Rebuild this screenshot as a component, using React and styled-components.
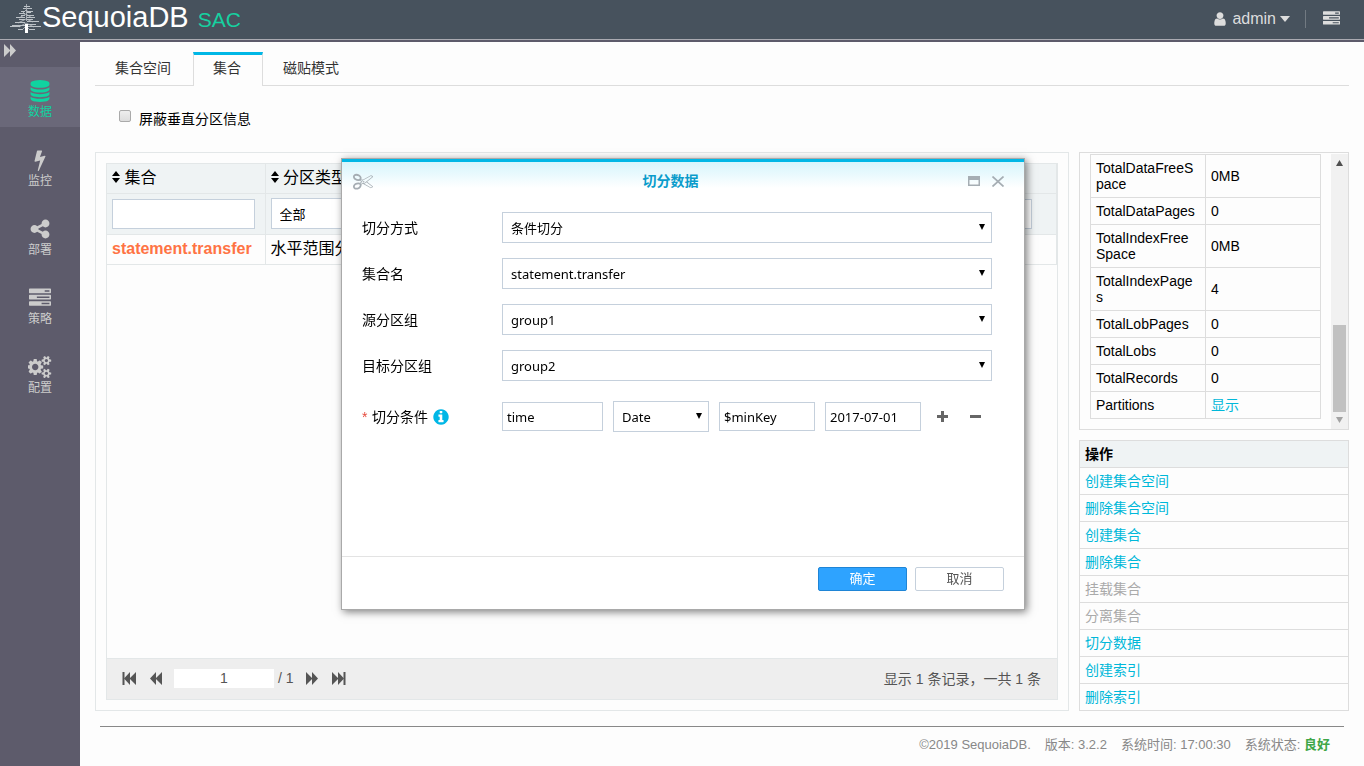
// React
import React from "react";

// StyledComponent
import styled, { createGlobalStyle } from "styled-components";

const ICONS = {
  database:
    "M896 768q237 0 443-43t325-127v170q0 69-103 128t-280 93.5-385 34.5-385-34.5-280-93.5-103-128v-170q119 84 325 127t443 43zm0 768q237 0 443-43t325-127v170q0 69-103 128t-280 93.5-385 34.5-385-34.5-280-93.5-103-128v-170q119 84 325 127t443 43zm0-384q237 0 443-43t325-127v170q0 69-103 128t-280 93.5-385 34.5-385-34.5-280-93.5-103-128v-170q119 84 325 127t443 43zm0-1152q208 0 385 34.5t280 93.5 103 128v128q0 69-103 128t-280 93.5-385 34.5-385-34.5-280-93.5-103-128v-128q0-69 103-128t280-93.5 385-34.5z",
  bolt: "M1333 566q18 20 7 44l-540 1157q-13 25-42 25-4 0-14-2-17-5-25.5-19t-4.5-30l197-808-406 101q-4 1-12 1-18 0-31-11-18-15-13-39l201-825q4-14 16-23t28-9h328q19 0 32 12.5t13 29.5q0 8-5 18l-171 463 396-98q8-2 12-2 19 0 34 15z",
  share:
    "M1344 1024q133 0 226.5 93.5t93.5 226.5-93.5 226.5-226.5 93.5-226.5-93.5-93.5-226.5q0-12 2-34l-360-180q-92 86-218 86-133 0-226.5-93.5t-93.5-226.5 93.5-226.5 226.5-93.5q126 0 218 86l360-180q-2-22-2-34 0-133 93.5-226.5t226.5-93.5 226.5 93.5 93.5 226.5-93.5 226.5-226.5 93.5q-126 0-218-86l-360 180q2 22 2 34t-2 34l360 180q92-86 218-86z",
  tasks:
    "M1024 1408h640v-128h-640v128zm-384-512h1024v-128h-1024v128zm640-512h384v-128h-384v128zm512 832v256q0 26-19 45t-45 19h-1664q-26 0-45-19t-19-45v-256q0-26 19-45t45-19h1664q26 0 45 19t19 45zm0-512v256q0 26-19 45t-45 19h-1664q-26 0-45-19t-19-45v-256q0-26 19-45t45-19h1664q26 0 45 19t19 45zm0-512v256q0 26-19 45t-45 19h-1664q-26 0-45-19t-19-45v-256q0-26 19-45t45-19h1664q26 0 45 19t19 45z",
  cogs: "M832 896q0-106-75-181t-181-75-181 75-75 181 75 181 181 75 181-75 75-181zm768 512q0-52-38-90t-90-38-90 38-38 90q0 53 37.5 90.5t90.5 37.5 90.5-37.5 37.5-90.5zm0-1024q0-52-38-90t-90-38-90 38-38 90q0 53 37.5 90.5t90.5 37.5 90.5-37.5 37.5-90.5zm-384 421v185q0 10-7 19.5t-16 10.5l-155 24q-11 35-32 76 34 48 90 115 7 11 7 20 0 12-7 19-23 30-82.5 89.5t-78.5 59.5q-11 0-21-7l-115-90q-37 19-77 31-11 108-23 155-7 24-30 24h-186q-11 0-20-7.5t-10-17.5l-23-153q-34-10-75-31l-118 89q-7 7-20 7-11 0-21-8-144-133-144-160 0-9 7-19 10-14 41-53t47-61q-23-44-35-82l-152-24q-10-1-17-9.5t-7-19.5v-185q0-10 7-19.5t16-10.5l155-24q11-35 32-76-34-48-90-115-7-11-7-20 0-12 7-20 22-30 82-89t79-59q11 0 21 7l115 90q34-18 77-32 11-108 23-154 7-24 30-24h186q11 0 20 7.5t10 17.5l23 153q34 10 75 31l118-89q8-7 20-7 11 0 21 8 144 133 144 160 0 8-7 19-12 16-42 54t-45 60q23 48 34 82l152 23q10 2 17 10.5t7 19.5zm640 533v140q0 16-149 31-12 27-30 52 51 113 51 138 0 4-4 7-122 71-124 71-8 0-46-47t-52-68q-20 2-30 2t-30-2q-14 21-52 68t-46 47q-2 0-124-71-4-3-4-7 0-25 51-138-18-25-30-52-149-15-149-31v-140q0-16 149-31 13-29 30-52-51-113-51-138 0-4 4-7 4-2 35-20t59-34 30-16q8 0 46 46.5t52 67.5q20-2 30-2t30 2q51-71 92-112l6-2q4 0 124 70 4 3 4 7 0 25-51 138 17 23 30 52 149 15 149 31zm0-1024v140q0 16-149 31-12 27-30 52 51 113 51 138 0 4-4 7-122 71-124 71-8 0-46-47t-52-68q-20 2-30 2t-30-2q-14 21-52 68t-46 47q-2 0-124-71-4-3-4-7 0-25 51-138-18-25-30-52-149-15-149-31v-140q0-16 149-31 13-29 30-52-51-113-51-138 0-4 4-7 4-2 35-20t59-34 30-16q8 0 46 46.5t52 67.5q20-2 30-2t30 2q51-71 92-112l6-2q4 0 124 70 4 3 4 7 0 25-51 138 17 23 30 52 149 15 149 31z",
  user: "M1536 1399q0 109-62.5 187t-150.5 78h-854q-88 0-150.5-78t-62.5-187q0-85 8.5-160.5t31.5-152 58.5-131 94-89 134.5-34.5q131 128 313 128t313-128q76 0 134.5 34.5t94 89 58.5 131 31.5 152 8.5 160.5zm-256-887q0 159-112.5 271.5t-271.5 112.5-271.5-112.5-112.5-271.5 112.5-271.5 271.5-112.5 271.5 112.5 112.5 271.5z",
  info: "M1152 1376v-160q0-14-9-23t-23-9h-96v-512q0-14-9-23t-23-9h-320q-14 0-23 9t-9 23v160q0 14 9 23t23 9h96v320h-96q-14 0-23 9t-9 23v160q0 14 9 23t23 9h448q14 0 23-9t9-23zm-128-896v-160q0-14-9-23t-23-9h-192q-14 0-23 9t-9 23v160q0 14 9 23t23 9h192q14 0 23-9t9-23zm640 416q0 209-103 385.5t-279.5 279.5-385.5 103-385.5-103-279.5-279.5-103-385.5 103-385.5 279.5-279.5 385.5-103 385.5 103 279.5 279.5 103 385.5z",
  scissors:
    "M960 896q26 0 45 19t19 45-19 45-45 19-45-19-19-45 19-45 45-19zm300 64l507 398q28 20 25 56-5 35-35 51l-128 64q-13 7-29 7-17 0-31-8l-690-387-110 66q-8 4-12 5 14 49 10 97-7 77-56 147.5t-132 123.5q-132 84-277 84-136 0-222-78-90-84-79-207 7-76 56-147t131-124q132-84 278-84 83 0 151 31 9-13 22-22l122-73-122-73q-13-9-22-22-68 31-151 31-146 0-278-84-82-53-131-124t-56-147q-5-59 15.5-113t63.5-93q85-79 222-79 145 0 277 84 83 52 132 123t56 148q4 48-10 97 4 1 12 5l110 66 690-387q14-8 31-8 16 0 29 7l128 64q30 16 35 51 3 36-25 56zm-681-260q46-42 21-108t-106-117q-92-59-192-59-74 0-113 36-46 42-21 108t106 117q92 59 192 59 74 0 113-36zm-85 745q81-51 106-117t-21-108q-39-36-113-36-100 0-192 59-81 51-106 117t21 108q39 36 113 36 100 0 192-59zm178-613l96 58v-11q0-36 33-56l14-8-79-44-26 26q-3 3-10 11t-12 12q-2 2-4 3.5t-3 2.5zm224 224l96 32 736-576-128-64-768 431v113l-160 96 9 8q2 2 7 6 4 4 11 12t11 12l26 26zm704 416l128-64-520-408-177 138q-2 3-13 7z",
};

const MENUS = [
  { name: "数据", icon: "database", size: 22, active: true },
  { name: "监控", icon: "bolt", size: 22 },
  { name: "部署", icon: "share", size: 22 },
  { name: "策略", icon: "tasks", size: 22 },
  { name: "配置", icon: "cogs", size: 24 },
];

const DETAILS = [
  ["TotalDataFreeSpace", "0MB"],
  ["TotalDataPages", "0"],
  ["TotalIndexFreeSpace", "0MB"],
  ["TotalIndexPages", "4"],
  ["TotalLobPages", "0"],
  ["TotalLobs", "0"],
  ["TotalRecords", "0"],
];

const ACTIONS = [
  { name: "创建集合空间" },
  { name: "删除集合空间" },
  { name: "创建集合" },
  { name: "删除集合" },
  { name: "挂载集合", disabled: true },
  { name: "分离集合", disabled: true },
  { name: "切分数据" },
  { name: "创建索引" },
  { name: "删除索引" },
];

const FIELDS = [
  { id: "mode", label: "切分方式", value: "条件切分" },
  { id: "name", label: "集合名", value: "statement.transfer" },
  { id: "source", label: "源分区组", value: "group1" },
  { id: "target", label: "目标分区组", value: "group2" },
];

function Icon({ name, size }) {
  return (
    <svg
      width={size}
      height={size}
      viewBox={name === "cogs" ? "0 0 1920 1792" : "0 0 1792 1792"}
      fill="currentColor"
      aria-hidden="true"
    >
      <path d={ICONS[name]} />
    </svg>
  );
}

function TreeLogo() {
  return (
    <svg width="32" height="31" viewBox="0 0 32 31" aria-hidden="true">
      <g fill="none" stroke="#bcc2c7">
        <path d="M14 3.500h6M13 5.500h3M17 5.500h5M11 8.500h4M17 8.500h6M9 10.500h6M17 9.500h4M11 12.500h4M17 12.500h7M6 14.500h9M17 14.500h8M9 16.500h6M17 16.500h6M5 19.500h10M17 18.500h12M2 22.500h13M17 21.500h9M0 23.500h10M17 23.500h14M8 26.500h5M19 26.500h6" />
        <path d="M16.500 1v17M12 11l4-4 4 3M9 15l7-4 6 4M8 20l8-4 7 3M9 24l7-4 8 4M12 27l4-4 4 4" strokeWidth=".8" />
      </g>
      <path d="M15 21h3v9h-3z" fill="#fff" />
    </svg>
  );
}

function Skip({ back, edge }) {
  return (
    <svg width="15" height="13" viewBox="0 0 15 13" fill="currentColor" aria-hidden="true">
      <g transform={back ? "translate(15 0) scale(-1 1)" : undefined}>
        <path d="M1 0l6 6V0l6 6.5-6 6.5V7l-6 6z" />
        {edge && <path d="M12.500 0h2v13h-2z" />}
      </g>
    </svg>
  );
}

function Caret({ up, width = 7 }) {
  return (
    <svg width={width} height="6" viewBox="0 0 8 6" preserveAspectRatio="none" fill="currentColor" aria-hidden="true">
      <path d={up ? "M0 6l4-6 4 6z" : "M0 0h8L4 6z"} />
    </svg>
  );
}

function SortIcon() {
  return (
    <svg width="8" height="12" viewBox="0 0 8 12" fill="currentColor" aria-hidden="true">
      <path d="M0 5l4-5 4 5zM0 7h8l-4 5z" />
    </svg>
  );
}

function Select({ id, label, value }) {
  return (
    <SelectWrap>
      <SelectBox id={id} aria-label={label} defaultValue={value}>
        <option>{value}</option>
      </SelectBox>
      <SelectArrow>
        <Caret width={6} />
      </SelectArrow>
    </SelectWrap>
  );
}

function SplitDialog() {
  return (
    <Overlay>
      <Dialog role="dialog" aria-labelledby="dialog-title">
        <DialogHeader>
          <Icon name="scissors" size={20} />
          <DialogTitle id="dialog-title">切分数据</DialogTitle>
          <HeaderButton aria-label="最大化">
            <svg width="12" height="10" viewBox="0 0 12 10" aria-hidden="true">
              <path d="M0 0h12v10H0zM1.500 4v4.500h9V4z" fill="currentColor" fillRule="evenodd" />
            </svg>
          </HeaderButton>
          <HeaderButton aria-label="关闭">
            <svg width="12" height="11" viewBox="0 0 12 11" aria-hidden="true">
              <path d="M.5.5l11 10M11.500.5l-11 10" stroke="currentColor" strokeWidth="1.700" />
            </svg>
          </HeaderButton>
        </DialogHeader>
        <DialogBody>
          {FIELDS.map((field) => (
            <Field key={field.id}>
              <FieldLabel htmlFor={field.id}>{field.label}</FieldLabel>
              <Select id={field.id} value={field.value} />
            </Field>
          ))}
          <Field>
            <FieldLabel as="div">
              <Star>*</Star>
              <label htmlFor="field">切分条件</label>
              <InfoMark>
                <Icon name="info" size={18} />
              </InfoMark>
            </FieldLabel>
            <Condition>
              <TextBox id="field" defaultValue="time" />
              <Select label="类型" value="Date" />
              <TextBox aria-label="开始" defaultValue="$minKey" />
              <TextBox aria-label="结束" defaultValue="2017-07-01" />
              <StepButton aria-label="添加">
                <svg width="11" height="11" viewBox="0 0 11 11" fill="currentColor" aria-hidden="true">
                  <path d="M4 0h3v4h4v3H7v4H4V7H0V4h4z" />
                </svg>
              </StepButton>
              <StepButton aria-label="删除">
                <svg width="11" height="11" viewBox="0 0 11 11" fill="currentColor" aria-hidden="true">
                  <path d="M0 4h11v3H0z" />
                </svg>
              </StepButton>
            </Condition>
          </Field>
        </DialogBody>
        <DialogFooter>
          <DialogButton $primary>确定</DialogButton>
          <DialogButton>取消</DialogButton>
        </DialogFooter>
      </Dialog>
    </Overlay>
  );
}

export default function App() {
  return (
    <Page>
      <GlobalStyle />
      <Header>
        <TreeLogo />
        <Brand>SequoiaDB</Brand>
        <Product>SAC</Product>
        <UserButton>
          <Icon name="user" size={16} />
          admin
          <Caret width={10} />
        </UserButton>
        <HeaderTasks aria-label="任务">
          <Icon name="tasks" size={17} />
        </HeaderTasks>
      </Header>
      <Body>
        <Sidebar>
          <Collapse aria-label="展开">
            <Skip />
          </Collapse>
          {MENUS.map((menu) => (
            <MenuItem key={menu.name} href="#" $active={menu.active}>
              <MenuIcon>
                <Icon name={menu.icon} size={menu.size} />
              </MenuIcon>
              {menu.name}
            </MenuItem>
          ))}
        </Sidebar>
        <Main>
          <Tabs>
            <Tab href="#">集合空间</Tab>
            <Tab href="#" $active>
              集合
            </Tab>
            <Tab href="#">磁贴模式</Tab>
          </Tabs>
          <CheckLine>
            <CheckBox type="checkbox" />
            屏蔽垂直分区信息
          </CheckLine>
          <Columns>
            <Panel>
              <GridBox>
                <GridTable>
                  <thead>
                    <tr>
                      <HeadCell>
                        <SortIcon /> 集合
                      </HeadCell>
                      <HeadCell>
                        <SortIcon /> 分区类型
                      </HeadCell>
                      <HeadCell $wide />
                    </tr>
                    <tr>
                      <FilterCell>
                        <FilterInput aria-label="集合" />
                      </FilterCell>
                      <FilterCell>
                        <Select label="分区类型" value="全部" />
                      </FilterCell>
                      <FilterCell $last>
                        <FilterInput aria-label="分区组" />
                      </FilterCell>
                    </tr>
                  </thead>
                  <tbody>
                    <tr>
                      <DataCell>
                        <NameLink href="#">statement.transfer</NameLink>
                      </DataCell>
                      <DataCell>水平范围分区</DataCell>
                      <DataCell />
                    </tr>
                  </tbody>
                </GridTable>
                <Pager>
                  <PagerButton aria-label="首页">
                    <Skip back edge />
                  </PagerButton>
                  <PagerButton aria-label="上一页">
                    <Skip back />
                  </PagerButton>
                  <PageInput aria-label="页码" defaultValue="1" />
                  / 1
                  <PagerButton aria-label="下一页">
                    <Skip />
                  </PagerButton>
                  <PagerButton aria-label="末页">
                    <Skip edge />
                  </PagerButton>
                  <PagerInfo>显示 1 条记录，一共 1 条</PagerInfo>
                </Pager>
              </GridBox>
            </Panel>
            <Aside>
              <DetailBox>
                <DetailTable>
                  <tbody>
                    {DETAILS.map(([key, value]) => (
                      <tr key={key}>
                        <td>{key}</td>
                        <td>{value}</td>
                      </tr>
                    ))}
                    <tr>
                      <td>Partitions</td>
                      <td>
                        <BlueLink href="#">显示</BlueLink>
                      </td>
                    </tr>
                  </tbody>
                </DetailTable>
                <ScrollTrack>
                  <Caret up />
                  <ScrollThumb />
                  <ScrollEnd>
                    <Caret />
                  </ScrollEnd>
                </ScrollTrack>
              </DetailBox>
              <ActionList>
                <ActionTitle>操作</ActionTitle>
                {ACTIONS.map((action) => (
                  <ActionItem key={action.name}>
                    <BlueLink href="#" $disabled={action.disabled}>
                      {action.name}
                    </BlueLink>
                  </ActionItem>
                ))}
              </ActionList>
            </Aside>
          </Columns>
          <Footer>
            <span>©2019 SequoiaDB.</span>
            <span>版本: 3.2.2</span>
            <span>系统时间: 17:00:30</span>
            <span>
              系统状态: <Good>良好</Good>
            </span>
          </Footer>
        </Main>
      </Body>
      <SplitDialog />
    </Page>
  );
}

const GlobalStyle = createGlobalStyle`
  * {
    box-sizing: border-box;
  }
  body {
    margin: 0;
    background-color: #fdfdfd;
    color: #000;
    font-family: "Liberation Sans", "Noto Sans CJK SC", sans-serif;
    font-size: 14px;
  }
  button, input, select {
    font: inherit;
    color: inherit;
  }
  a {
    text-decoration: none;
  }
  svg {
    flex: none;
  }
`;

const Page = styled.div`
  display: flex;
  flex-direction: column;
  min-height: 100vh;
`;

const Header = styled.header`
  display: flex;
  align-items: center;
  height: 40px;
  padding: 0 24px 2px 10px;
  background-color: #47525d;
  border-bottom: 1px solid #aaaab1;
`;

const Brand = styled.div`
  padding-bottom: 3px;
  color: #fff;
  font-size: 29px;
  line-height: 34px;
`;

const Product = styled.div`
  margin: 2px auto 0 9px;
  color: #16d1a0;
  font-size: 21px;
`;

const UserButton = styled.button`
  display: flex;
  align-items: center;
  gap: 4px;
  height: 18px;
  padding: 0 15px 0 0;
  border: none;
  border-right: 1px solid #727a82;
  background: none;
  color: #ddd;
  font-size: 16px;
`;

const HeaderTasks = styled.button`
  display: flex;
  padding: 0 0 0 17px;
  border: none;
  background: none;
  color: #ddd;
`;

const Body = styled.div`
  display: flex;
  flex: 1;
  border-top: 2px solid #5d5b6b;
`;

const Sidebar = styled.nav`
  flex: none;
  width: 80px;
  background-color: #5d5b6b;
`;

const Collapse = styled.button`
  display: flex;
  width: 100%;
  height: 25px;
  padding: 2px 3px;
  border: none;
  background: none;
  color: #ccc;
`;

const MenuItem = styled.a`
  display: flex;
  flex-direction: column;
  align-items: center;
  height: 60px;
  margin-bottom: 9px;
  padding-top: 12px;
  background-color: ${(props) => (props.$active ? "#6a6879" : "transparent")};
  color: ${(props) => (props.$active ? "#0fd3a0" : "#ccc")};
  font-size: 12px;
  line-height: 18px;
`;

const MenuIcon = styled.span`
  display: flex;
  align-items: center;
  height: 24px;
`;

const Main = styled.main`
  display: flex;
  flex: 1;
  flex-direction: column;
  min-width: 0;
  padding: 10px 15px 0;
`;

const Tabs = styled.nav`
  display: flex;
  height: 34px;
  border-bottom: 1px solid #ddd;
`;

const Tab = styled.a`
  height: 34px;
  padding: 0 21px 0 19px;
  border: 1px solid ${(props) => (props.$active ? "#ddd" : "transparent")};
  border-top: 3px solid ${(props) => (props.$active ? "#00b7e6" : "transparent")};
  border-bottom: none;
  background-color: ${(props) => (props.$active ? "#fdfdfd" : "transparent")};
  color: #333;
  line-height: 26px;
`;

const CheckLine = styled.label`
  display: flex;
  align-items: center;
  gap: 8px;
  height: 66px;
  padding: 0 0 3px 24px;
`;

const CheckBox = styled.input`
  appearance: none;
  width: 12px;
  height: 12px;
  margin: 0 0 3px;
  border: 1px solid #aaa;
  border-radius: 2px;
  background-image: linear-gradient(#eee, #ddd);
`;

const Columns = styled.div`
  display: flex;
  gap: 10px;
`;

const Panel = styled.section`
  flex: 1;
  display: flex;
  min-width: 0;
  padding: 10px;
  border: 1px solid #e3e7e8;
`;

const GridBox = styled.div`
  display: flex;
  flex: 1;
  flex-direction: column;
  min-width: 0;
  border: 1px solid #e3e7e8;
`;

const GridTable = styled.table`
  width: 100%;
  table-layout: fixed;
  border-collapse: collapse;
  font-size: 16px;
`;

const HeadCell = styled.th`
  width: ${(props) => (props.$wide ? "auto" : "158px")};
  height: 29px;
  padding: 0 5px;
  border-right: 1px solid #e3e7e8;
  border-bottom: 1px solid #e3e7e8;
  background-color: #eff3f4;
  font-weight: normal;
  line-height: 24px;
  text-align: left;
  white-space: nowrap;
`;

const FilterCell = styled.td`
  height: 41px;
  padding: 0 ${(props) => (props.$last ? "24px" : "10px")} 0 5px;
  border-right: 1px solid #e3e7e8;
  border-bottom: 1px solid #e3e7e8;
  background-color: #eff3f4;
`;

const FilterInput = styled.input`
  display: block;
  width: 100%;
  height: 30px;
  border: 1px solid #c5d0dc;
  background-color: #fff;
`;

const DataCell = styled.td`
  height: 30px;
  padding: 0 5px;
  border-right: 1px solid #e3e7e8;
  border-bottom: 1px solid #e3e7e8;
  line-height: 24px;
  white-space: nowrap;
`;

const NameLink = styled.a`
  color: #ff7344;
  font-weight: bold;
`;

const Pager = styled.div`
  display: flex;
  align-items: center;
  gap: 11px;
  height: 41px;
  margin-top: auto;
  padding: 0 16px 2px 15px;
  border-top: 1px solid #e3e7e8;
  background-color: #eee;
  color: #555;
`;

const PagerButton = styled.button`
  display: flex;
  padding: 0;
  border: none;
  background: none;
`;

const PageInput = styled.input`
  width: 100px;
  height: 19px;
  margin-right: -7px;
  border: none;
  background-color: #fff;
  text-align: center;
`;

const PagerInfo = styled.div`
  margin-left: auto;
`;

const Aside = styled.aside`
  display: flex;
  flex: none;
  flex-direction: column;
  gap: 10px;
  width: 270px;
`;

const DetailBox = styled.section`
  display: flex;
  align-items: flex-start;
  justify-content: space-between;
  padding: 1px 0 0 10px;
  border: 1px solid #ddd;
`;

const DetailTable = styled.table`
  width: 231px;
  margin-bottom: 10px;
  table-layout: fixed;
  border-collapse: collapse;
  line-height: 16px;
  word-break: break-all;

  td {
    padding: 5px 8px 5px 5px;
    border: 1px solid #ddd;
  }
`;

const ScrollTrack = styled.div`
  display: flex;
  flex-direction: column;
  align-self: stretch;
  align-items: center;
  justify-content: space-between;
  width: 17px;
  padding: 6px 0;
  background-color: #f1f1f1;
  color: #505050;
`;

const ScrollThumb = styled.div`
  width: 13px;
  height: 87px;
  margin: auto 0 5px;
  background-color: #c1c1c1;
`;

const ScrollEnd = styled.span`
  display: flex;
  color: #a3a3a3;
`;

const ActionList = styled.ul`
  margin: 0;
  padding: 0;
  border: 1px solid #ddd;
  list-style: none;
`;

const ActionItem = styled.li`
  height: 27px;
  padding-left: 5px;
  border-bottom: 1px solid #ddd;
  line-height: 26px;

  &:last-child {
    height: 26px;
    border-bottom: none;
  }
`;

const ActionTitle = styled(ActionItem)`
  background-color: #eff3f4;
  font-weight: bold;
`;

const BlueLink = styled.a`
  color: ${(props) => (props.$disabled ? "#aaa" : "#00b8d9")};
`;

const Footer = styled.footer`
  display: flex;
  justify-content: flex-end;
  gap: 14px;
  margin: 15px 5px 0;
  padding: 9px 14px 0 0;
  border-top: 1px solid #888;
  color: #888;
  font-size: 13px;
  line-height: 18px;
`;

const Good = styled.b`
  color: #3fa648;
`;

/* dialog */

const Overlay = styled.div`
  position: fixed;
  inset: 0;
  display: flex;
  align-items: center;
  justify-content: center;
  padding: 2px 0 0 2px;
`;

const Dialog = styled.div`
  width: 684px;
  border: 1px solid #a9a9a9;
  background-color: #fff;
  box-shadow: 2px 2px 8px rgba(0, 0, 0, 0.5);
`;

const DialogHeader = styled.div`
  display: flex;
  align-items: center;
  gap: 12px;
  height: 41px;
  padding: 0 20px 0 11px;
  border-top: 3px solid #00b7e6;
  background-image: linear-gradient(#d6f5fc, #fff 26px);
  color: #a5adb3;
`;

const DialogTitle = styled.h2`
  flex: 1;
  margin: 0;
  color: #0a9ccb;
  font-size: 14px;
  line-height: 20px;
  text-align: center;
`;

const HeaderButton = styled.button`
  display: flex;
  padding: 0;
  border: none;
  background: none;
  color: inherit;
`;

const DialogBody = styled.div`
  display: flex;
  flex-direction: column;
  gap: 15px;
  min-height: 356px;
  padding: 12px 32px 0 20px;
`;

const Field = styled.div`
  display: flex;
  align-items: center;

  &:last-child {
    margin-top: 5px;
  }
`;

const FieldLabel = styled.label`
  display: flex;
  align-items: center;
  flex: none;
  width: 140px;
  line-height: 20px;
`;

const Star = styled.span`
  width: 10px;
  color: #e64a3c;
`;

const InfoMark = styled.span`
  display: flex;
  margin-left: 4px;
  color: #00b7e6;
`;

const SelectWrap = styled.div`
  position: relative;
  flex: 1;
`;

const SelectBox = styled.select`
  appearance: none;
  display: block;
  width: 100%;
  height: 31px;
  padding: 0 8px;
  border: 1px solid #c5d0dc;
  border-radius: 0;
  background-color: #fff;
  font-family: "Noto Sans", "Noto Sans CJK SC", sans-serif;
  font-size: 13px;
`;

const SelectArrow = styled.span`
  position: absolute;
  top: 12px;
  right: 7px;
  display: flex;
  pointer-events: none;
`;

const Condition = styled.div`
  display: grid;
  grid-template-columns: 101px 96px 96px 96px 23px 23px;
  gap: 10px;
  align-items: center;
`;

const TextBox = styled.input`
  width: 100%;
  height: 29px;
  padding: 0 4px;
  border: 1px solid #c5d0dc;
  background-color: #fff;
  font-family: "Noto Sans", "Noto Sans CJK SC", sans-serif;
  font-size: 13px;
`;

const StepButton = styled.button`
  display: flex;
  justify-content: center;
  padding: 0;
  border: none;
  background: none;
  color: #666;
`;

const DialogFooter = styled.div`
  display: flex;
  justify-content: flex-end;
  gap: 8px;
  height: 53px;
  padding: 10px 20px;
  border-top: 1px solid #e3e3e3;
`;

const DialogButton = styled.button`
  width: 89px;
  height: 24px;
  padding: 0;
  border: 1px solid ${(props) => (props.$primary ? "#1f85d6" : "#c5d0dc")};
  border-radius: 2px;
  background-color: ${(props) => (props.$primary ? "#2ea3ff" : "#fff")};
  color: ${(props) => (props.$primary ? "#fff" : "#555")};
  font-size: 13px;
  line-height: 22px;
`;
